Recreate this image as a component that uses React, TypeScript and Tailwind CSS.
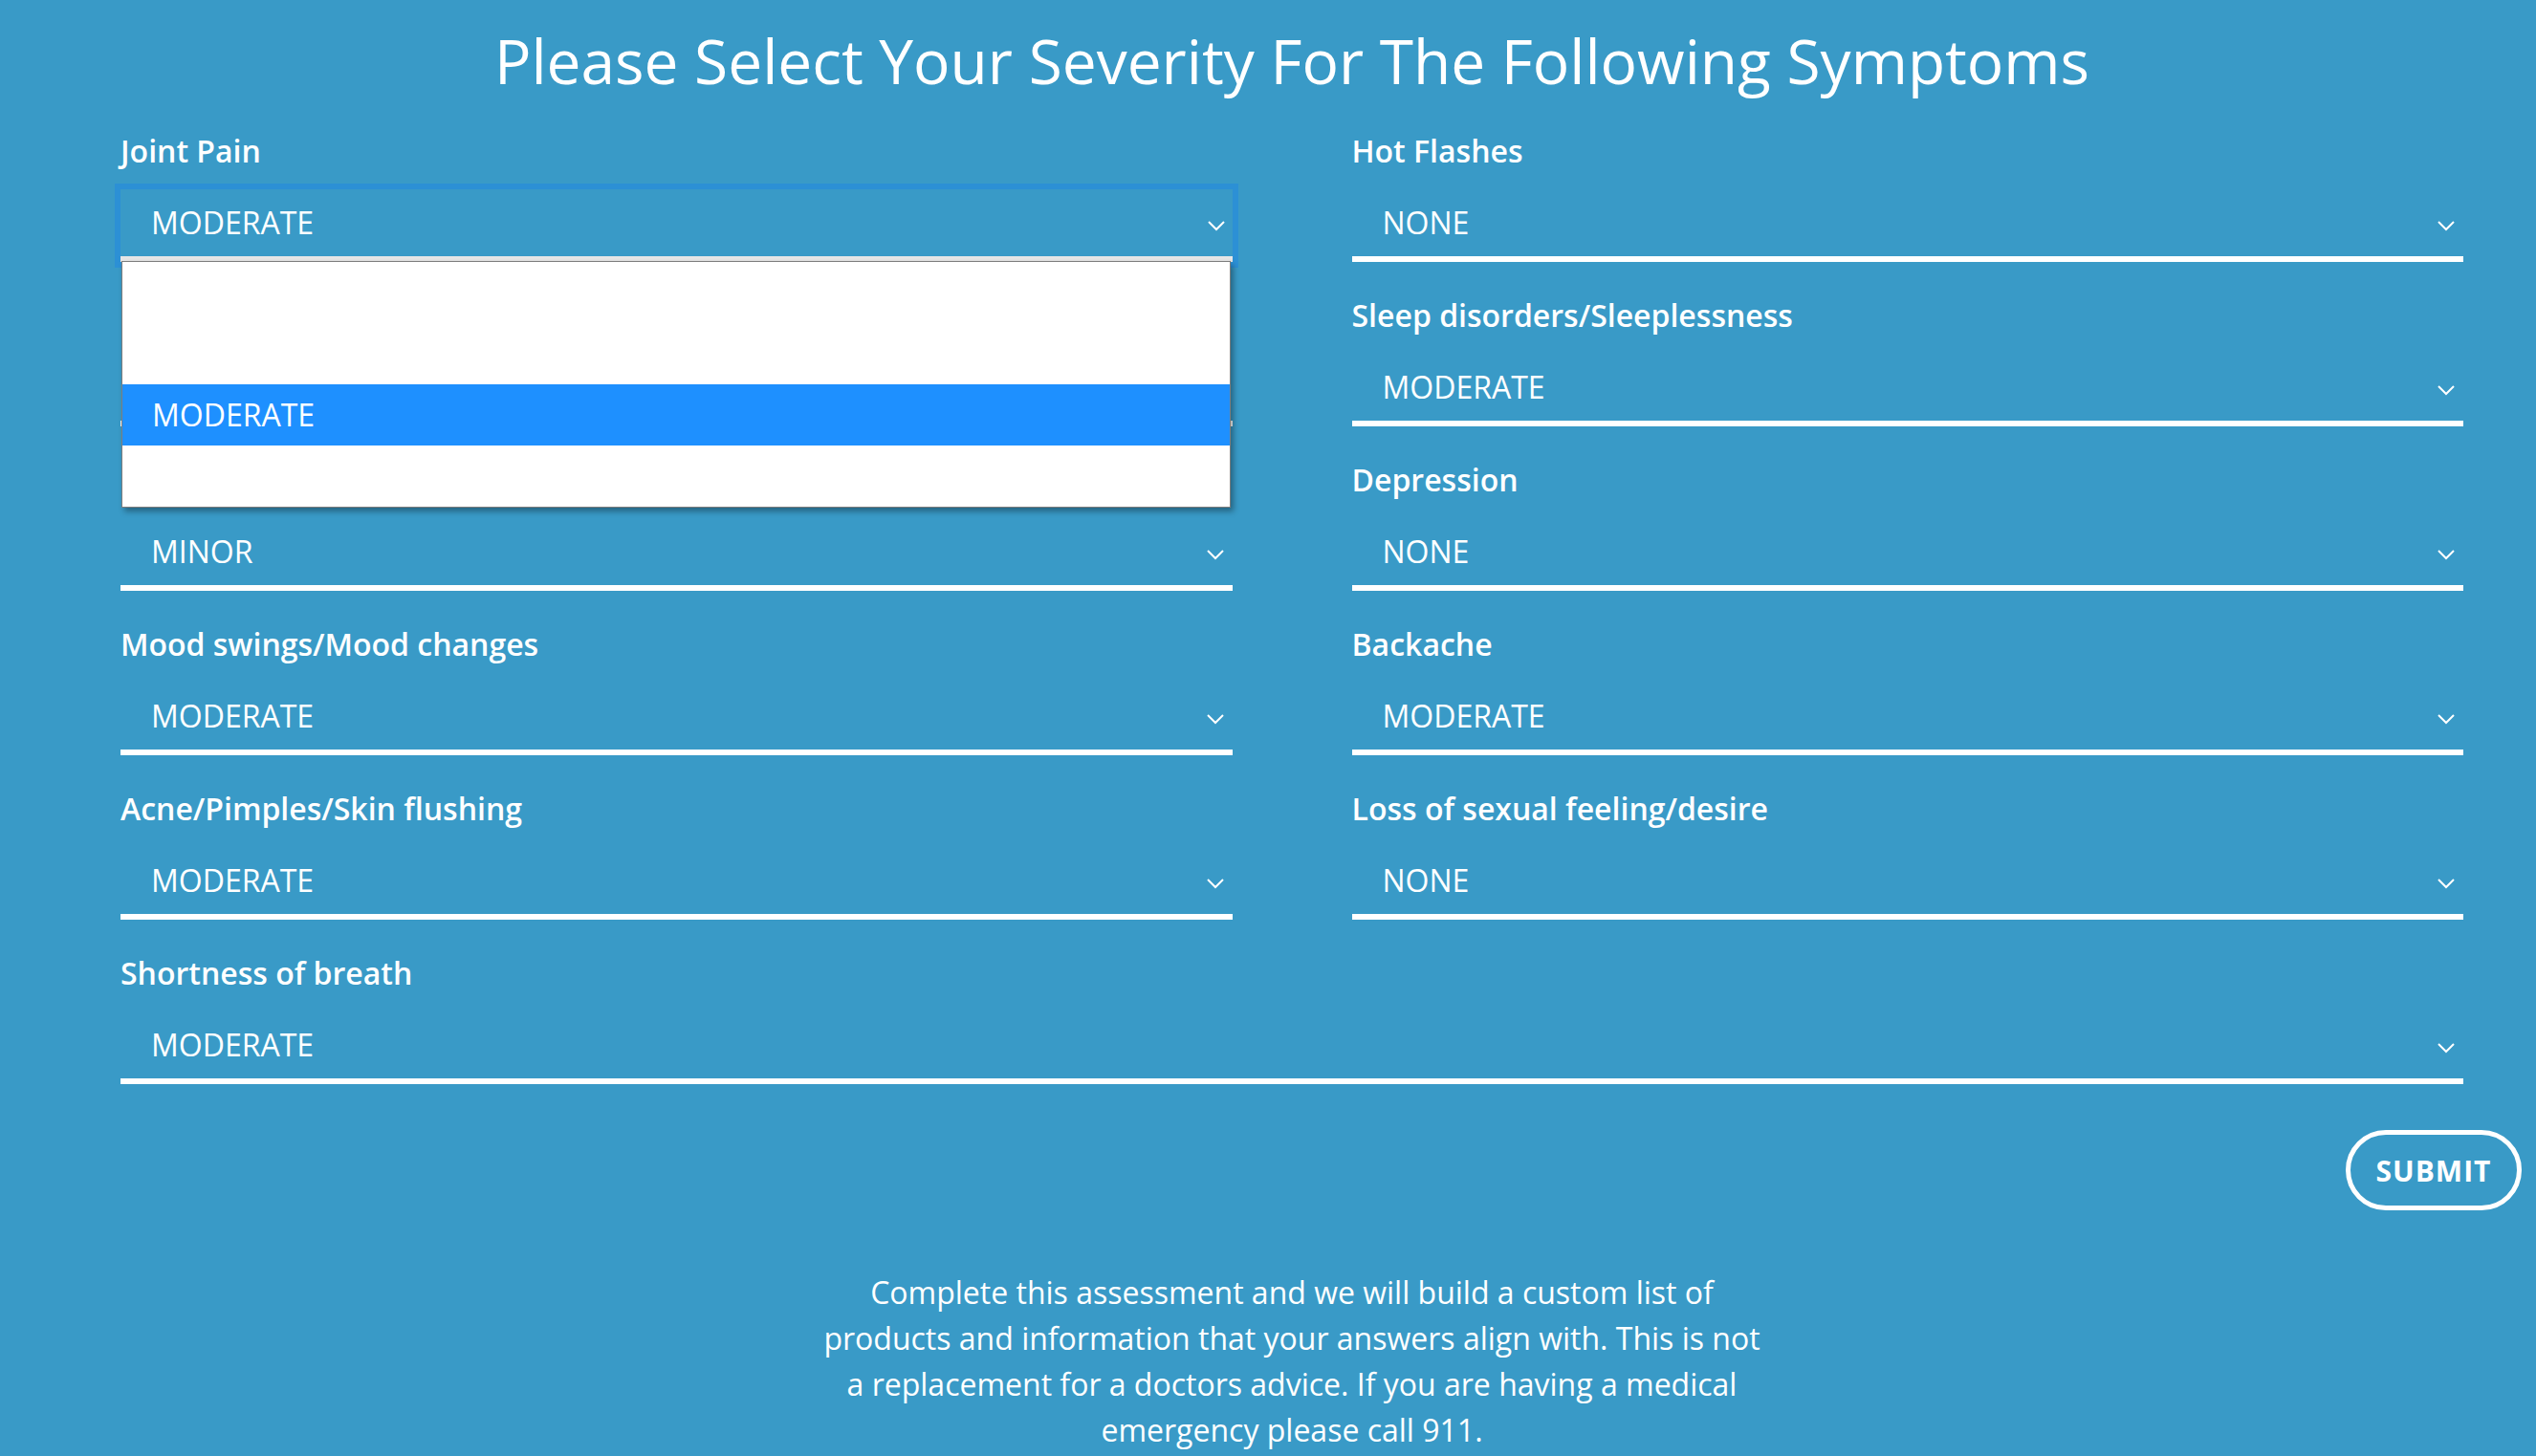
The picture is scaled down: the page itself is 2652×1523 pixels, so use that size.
import React from 'react'

type Field = {
  label: string
  value: string
  wide?: boolean
}

const fields: Field[] = [
  { label: 'Joint Pain', value: 'MODERATE' },
  { label: 'Hot Flashes', value: 'NONE' },
  { label: 'Night sweats', value: 'NONE' },
  { label: 'Sleep disorders/Sleeplessness', value: 'MODERATE' },
  { label: 'Irritability', value: 'MINOR' },
  { label: 'Depression', value: 'NONE' },
  { label: 'Mood swings/Mood changes', value: 'MODERATE' },
  { label: 'Backache', value: 'MODERATE' },
  { label: 'Acne/Pimples/Skin flushing', value: 'MODERATE' },
  { label: 'Loss of sexual feeling/desire', value: 'NONE' },
  { label: 'Shortness of breath', value: 'MODERATE', wide: true },
]

const options = ['NONE', 'MINOR', 'MODERATE', 'SEVERE']

function Chevron() {
  return (
    <svg width="18" height="11" viewBox="0 0 18 11" fill="none" className="shrink-0 translate-y-[3px]">
      <polyline points="1,1 9,9 17,1" stroke="white" strokeWidth="2" />
    </svg>
  )
}

function SeveritySelect({ value, open }: { value: string; open?: boolean }) {
  return (
    <div className="relative mt-[18px]">
      <div
        className={
          open
            ? 'flex h-[76px] items-center justify-between border-b-[6px] border-[#e6e6e6] pl-[32px] pr-[8px] outline-[6px] outline-solid outline-[#2c90d5]'
            : 'flex h-[76px] items-center justify-between border-b-[6px] border-white pl-[32px] pr-[9px]'
        }
      >
        <span className="text-[32px] leading-[44px] text-white">{value}</span>
        <Chevron />
      </div>

      {/* open list of the focused select */}
      {open && (
        <ul className="absolute left-[1px] top-[75px] z-10 w-[1160px] border border-[#7d7d7d] bg-white shadow-[3px_4px_6px_rgba(0,0,0,0.35)]">
          {options.map((opt) => (
            <li
              key={opt}
              className={
                opt === value
                  ? 'flex h-[64px] items-center bg-[#1e90ff] pl-[31px] text-[32px] text-white'
                  : 'flex h-[64px] items-center bg-white pl-[31px] text-[32px] text-white'
              }
            >
              {opt}
            </li>
          ))}
        </ul>
      )}
    </div>
  )
}

export default function App() {
  return (
    <div className="min-h-screen bg-[#399ac7] font-['Open_Sans',sans-serif] text-white">
      <div className="pl-[126px] pr-[76px] pt-[20px]">
        <h1 className="text-center text-[64px] font-normal leading-[87px]">
          Please Select Your Severity For The Following Symptoms
        </h1>

        <div className="mt-[29px] grid grid-cols-2 gap-x-[125px] gap-y-[34px]">
          {fields.map((f, i) => (
            <div key={f.label} className={f.wide ? 'col-span-2' : ''}>
              <label className="block text-[32px] font-semibold leading-[44px]">{f.label}</label>
              <SeveritySelect value={f.value} open={i === 0} />
            </div>
          ))}
        </div>
      </div>

      <div className="mt-[48px] flex justify-end pr-[15px]">
        <button className="flex h-[84px] w-[184px] items-center justify-center rounded-full border-[5px] border-white text-[30px] font-bold tracking-[1px] text-white">
          SUBMIT
        </button>
      </div>

      <div className="flex justify-center pl-[50px] pt-[62px]">
        <p className="max-w-[1000px] text-center text-[32px] leading-[48px]">
          Complete this assessment and we will build a custom list of products and information that your
          answers align with. This is not a replacement for a doctors advice. If you are having a medical
          emergency please call 911.
        </p>
      </div>
    </div>
  )
}
